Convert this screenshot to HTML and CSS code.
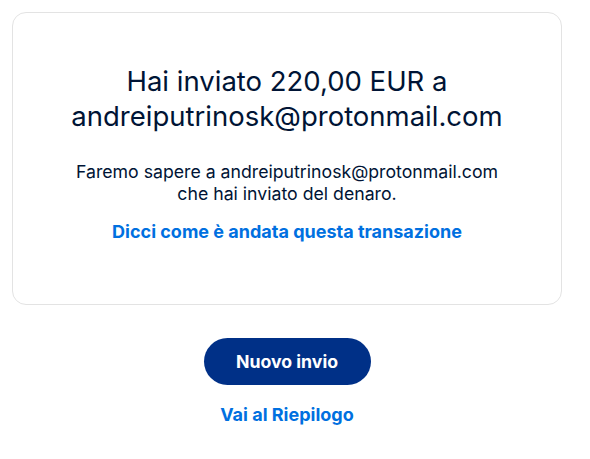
FILE: index.html
```html
<!DOCTYPE html>
<html lang="it">
<head>
<meta charset="utf-8">
<link rel="stylesheet" href="styles.css">
</head>
<body>
<main class="page">
  <section class="card">
    <h1 class="title">Hai inviato 220,00 EUR a andreiputrinosk@protonmail.com</h1>
    <p class="info">Faremo sapere a andreiputrinosk@protonmail.com<br>che hai inviato del denaro.</p>
    <a class="link" href="#">Dicci come è andata questa transazione</a>
  </section>
  <div class="actions">
    <button class="primary">Nuovo invio</button>
    <a class="link" href="#">Vai al Riepilogo</a>
  </div>
</main>
</body>
</html>
```
FILE: styles.css
```css
html, body { margin: 0; padding: 0; background: #fff; }
body {
  padding: 12px;
  font-family: Inter, "Liberation Sans", sans-serif;
  color: #001435;
}
.page { width: 550px; }
.card {
  box-sizing: border-box;
  height: 293px;
  border: 1px solid #e3e3e3;
  border-radius: 14px;
  padding: 51px 20px 0;
  display: flex;
  flex-direction: column;
  align-items: center;
  text-align: center;
}
.title {
  margin: 0;
  font-size: 27.5px;
  font-weight: 400;
  line-height: 35px;
  width: 460px;
}
.info {
  margin: 27px 0 0;
  font-size: 17.7px;
  line-height: 22px;
}
.link {
  color: #0070e0;
  font-weight: 700;
  font-size: 18px;
  line-height: 22px;
  text-decoration: none;
}
.card .link { margin-top: 15.5px; }
.actions {
  display: flex;
  flex-direction: column;
  align-items: center;
  padding-top: 33px;
  gap: 18.5px;
}
.primary {
  height: 47px;
  width: 167px;
  padding: 0;
  border: none;
  border-radius: 24px;
  background: #003087;
  color: #fff;
  font-family: inherit;
  font-weight: 700;
  font-size: 17.7px;
}
```
